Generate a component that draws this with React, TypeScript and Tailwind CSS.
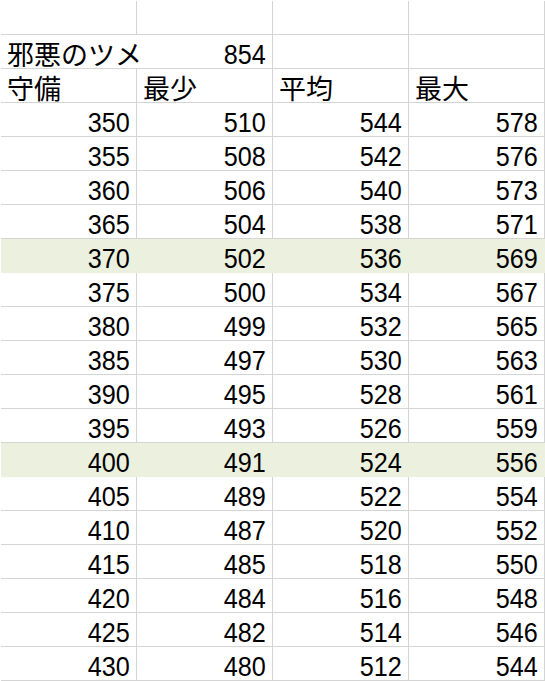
const rows: number[][] = [
  [350, 510, 544, 578],
  [355, 508, 542, 576],
  [360, 506, 540, 573],
  [365, 504, 538, 571],
  [370, 502, 536, 569],
  [375, 500, 534, 567],
  [380, 499, 532, 565],
  [385, 497, 530, 563],
  [390, 495, 528, 561],
  [395, 493, 526, 559],
  [400, 491, 524, 556],
  [405, 489, 522, 554],
  [410, 487, 520, 552],
  [415, 485, 518, 550],
  [420, 484, 516, 548],
  [425, 482, 514, 546],
  [430, 480, 512, 544],
];

const highlighted = [370, 400];

function Cell({ children, right, fill, noRight }: { children?: React.ReactNode; right?: boolean; fill?: boolean; noRight?: boolean }) {
  return (
    <div
      className={
        "h-[34px] border-b flex items-end overflow-visible whitespace-nowrap " +
        (noRight ? "" : "border-r ") +
        (fill ? "bg-[#ebf1de] border-[#ebf1de] " : "border-[#d4d4d4] ") +
        (right ? "justify-end pr-[6px]" : "justify-start pl-[6px]")
      }
    >
      {children}
    </div>
  );
}

function Num({ v }: { v: number }) {
  return (
    <span className="inline-block origin-right scale-x-[0.9] font-['Liberation_Sans',sans-serif] text-[28px] leading-[28px] mb-[-1px] text-black">
      {v}
    </span>
  );
}

function Label({ t }: { t: string }) {
  return (
    <span className="font-['Noto_Sans_CJK_JP',sans-serif] text-[27px] leading-[26px] mb-px text-black">
      {t}
    </span>
  );
}

export default function App() {
  return (
    <div className="w-[545px] h-[681px] bg-white overflow-hidden pl-px pt-px">
      <div className="grid grid-cols-[136px_136px_136px_136px]">
        <Cell />
        <Cell />
        <Cell />
        <Cell />

        <Cell noRight>
          <Label t="邪悪のツメ" />
        </Cell>
        <Cell right>
          <Num v={854} />
        </Cell>
        <Cell />
        <Cell />

        <Cell>
          <Label t="守備" />
        </Cell>
        <Cell>
          <Label t="最少" />
        </Cell>
        <Cell>
          <Label t="平均" />
        </Cell>
        <Cell>
          <Label t="最大" />
        </Cell>

        {rows.map((r) =>
          r.map((v, i) => (
            <Cell key={r[0] + "-" + i} right fill={highlighted.includes(r[0])}>
              <Num v={v} />
            </Cell>
          ))
        )}
      </div>
    </div>
  );
}
